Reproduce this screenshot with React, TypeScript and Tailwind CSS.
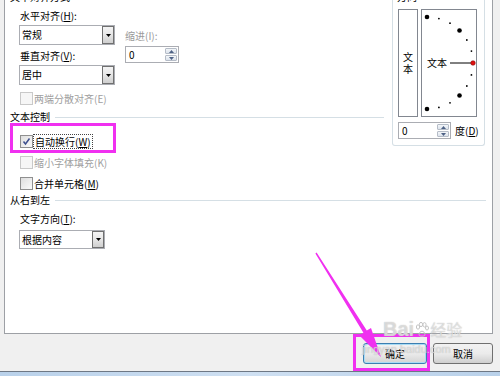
import React from 'react';

const Caret = () => (
  <svg width="5" height="3" viewBox="0 0 5 3">
    <path d="M0 0 H5 L2.5 3 Z" fill="#000" />
  </svg>
);

const Combo = ({ text, w, h }: { text: string; w: string; h: string }) => (
  <div className={`flex ${w} ${h} border border-[#abadb3] bg-white`}>
    <span className="flex-1 pl-[2px] flex items-center">{text}</span>
    <div className="w-[12px] flex items-center justify-center border border-[#707070] bg-linear-to-b from-[#f4f4f4] via-[#e6e6e6] to-[#cfcfcf]">
      <Caret />
    </div>
  </div>
);

const Spin = ({ w }: { w: string }) => (
  <div className={`flex ${w} h-[17px] border border-[#abadb3] bg-white`}>
    <span className="flex-1 pl-[3px] flex items-center">0</span>
    <div className="w-[13px] flex flex-col gap-[1px] py-[1px] pr-[1px]">
      <div className="flex-1 flex items-center justify-center border border-[#b5bcc7] rounded-[1px] bg-linear-to-b from-[#f3f6f9] to-[#dce3ec]">
        <svg width="5" height="3" viewBox="0 0 5 3"><path d="M0 3 H5 L2.5 0 Z" fill="#4d6185" /></svg>
      </div>
      <div className="flex-1 flex items-center justify-center border border-[#b5bcc7] rounded-[1px] bg-linear-to-b from-[#f3f6f9] to-[#dce3ec]">
        <svg width="5" height="3" viewBox="0 0 5 3"><path d="M0 0 H5 L2.5 3 Z" fill="#4d6185" /></svg>
      </div>
    </div>
  </div>
);

const Check = ({ checked, disabled }: { checked?: boolean; disabled?: boolean }) => (
  <div
    className={`w-[13px] h-[13px] border flex items-center justify-center ${
      disabled
        ? 'border-[#c9c9c9] bg-[#f6f6f6]'
        : 'border-[#8f8f8f] bg-linear-to-br from-[#dedede] to-[#fbfbfb]'
    }`}
  >
    {checked && (
      <svg width="11" height="11" viewBox="0 0 11 11">
        <path d="M2.5 5.5 L4.5 8 L8.5 2.5" stroke="#3d4f8e" strokeWidth="1.5" fill="none" />
      </svg>
    )}
  </div>
);

const GroupLabel = ({ text, className = '' }: { text: string; className?: string }) => (
  <div className={`flex items-center h-[12px] ${className}`}>
    <span>{text}</span>
    <div className="flex-1 ml-[5px] border-t border-[#d5dfe5]" />
  </div>
);

export default function App() {
  const dots = [];
  for (let i = 0; i <= 12; i++) {
    const a = ((-90 + i * 15) * Math.PI) / 180;
    const x = 5 + 46 * Math.cos(a);
    const y = 53 + 46 * Math.sin(a);
    const big = i % 3 === 0;
    if (i === 6) continue;
    dots.push(<circle key={i} cx={x} cy={y} r={big ? 2.3 : 0.9} fill="#000" />);
  }

  return (
    <div className="relative w-[500px] h-[376px] overflow-hidden bg-[#f0f0f0] flex flex-col text-[10px] leading-[12px] text-black font-[family-name:'Noto_Sans_CJK_SC',sans-serif]">
      {/* tab page */}
      <div className="ml-[4px] w-[489px] h-[334px] shrink-0 bg-white border-l border-r border-b border-[#9da0a5] flex flex-col">
        <div className="flex h-[188px]">
          {/* left column */}
          <div className="w-[379px] flex flex-col">
            <div className="-mt-[9px] ml-[5px] h-[12px]">文本对齐方式</div>
            <div className="flex">
              <div className="ml-[14px] flex flex-col">
                <div className="mt-[7px] pl-[1px]">水平对齐(<u>H</u>):</div>
                <div className="mt-[3px]"><Combo text="常规" w="w-[96px]" h="h-[20px]" /></div>
                <div className="mt-[5px] pl-[1px]">垂直对齐(<u>V</u>):</div>
                <div className="mt-[3px]"><Combo text="居中" w="w-[96px]" h="h-[20px]" /></div>
              </div>
              <div className="ml-[10px] flex flex-col">
                <div className="mt-[27px] text-[#9a9a9a]">缩进(I):</div>
                <div className="mt-[4px]"><Spin w="w-[54px]" /></div>
              </div>
            </div>
            <div className="mt-[7px] ml-[15px] flex items-center gap-[1px] text-[#a0a0a0]">
              <Check disabled />
              <span>两端分散对齐(E)</span>
            </div>
            <GroupLabel text="文本控制" className="mt-[6px] ml-[5px]" />
            <div className="mt-[11px] ml-[15px] flex items-center">
              <Check checked />
              <span className="border border-dotted border-[#444] px-[1px] leading-[13px]">自动换行(<u>W</u>)</span>
            </div>
            <div className="mt-[7px] ml-[15px] flex items-center gap-[1px] text-[#a0a0a0]">
              <Check disabled />
              <span>缩小字体填充(K)</span>
            </div>
            <div className="mt-[8px] ml-[15px] flex items-center gap-[1px]">
              <Check />
              <span>合并单元格(<u>M</u>)</span>
            </div>
          </div>

          {/* orientation group */}
          <div className="ml-[8px] w-[93px] h-[146px] border-l border-r border-b border-[#d5dfe5] rounded-b-[3px] flex flex-col">
            <div className="-mt-[9px] ml-[4px] h-[12px]">方向</div>
            <div className="mt-[6px] flex">
              <div className="ml-[5px] w-[20px] h-[108px] border border-[#828790] flex flex-col items-center justify-center">
                <span>文</span>
                <span>本</span>
              </div>
              <div className="ml-[3px] w-[56px] h-[108px] border border-[#828790]">
                <svg width="54" height="106" viewBox="0 0 54 106">
                  {dots}
                  <text x="5" y="57" fontSize="10" fontFamily="Noto Sans CJK SC, sans-serif">文本</text>
                  <line x1="28" y1="53" x2="49" y2="53" stroke="#000" strokeWidth="1" />
                  <circle cx="51" cy="53" r="2.3" fill="#e01010" stroke="#700" strokeWidth="0.5" />
                </svg>
              </div>
            </div>
            <div className="mt-[5px] ml-[5px] flex items-center">
              <Spin w="w-[53px]" />
              <span className="ml-[4px]">度(<u>D</u>)</span>
            </div>
          </div>
        </div>

        <GroupLabel text="从右到左" className="mt-[6px] ml-[5px] mr-[6px]" />
        <div className="mt-[7px] ml-[15px]">文字方向(<u>T</u>):</div>
        <div className="mt-[5px] ml-[14px]">
          <Combo text="根据内容" w="w-[86px]" h="h-[19px]" />
        </div>
      </div>

      {/* buttons */}
      <div className="h-[37px] flex justify-end items-start pt-[9px] pr-[7px] gap-[6px]">
        <button className="w-[64px] h-[21px] rounded-[3px] border border-[#3c7fb1] bg-linear-to-b from-[#f2f2f2] via-[#ebebeb] to-[#d4d4d4] shadow-[inset_0_0_0_1px_#a9dcf5]">
          确定
        </button>
        <button className="w-[60px] h-[21px] rounded-[3px] border border-[#707070] bg-linear-to-b from-[#f2f2f2] via-[#ebebeb] to-[#cfcfcf]">
          取消
        </button>
      </div>
      <div className="flex-1 border-t border-[#6e7885] bg-linear-to-r from-[#b9d1ea] via-[#cfe0f2] to-[#b9d1ea]" />

      {/* annotations */}
      <div className="absolute left-[10px] top-[123px] w-[106px] h-[30px] border-[3px] border-[#f030f0]" />
      <div className="absolute left-[353px] top-[334px] w-[77px] h-[37px] border-[3px] border-[#f030f0]" />
      <svg className="absolute left-0 top-0 pointer-events-none" width="500" height="376" viewBox="0 0 500 376">
        <polygon
          points="315.4,253.4 316.6,252.6 366.8,330.5 371,327.9 381,357 359.2,335.3 363.4,332.7"
          fill="#f030f0"
        />
      </svg>
      <div className="absolute left-[383px] top-[318px] flex items-end text-white/50 [text-shadow:0_0_1px_#b0b0b0] pointer-events-none">
        <span className="text-[20px] leading-[22px] font-bold font-[family-name:'Liberation_Sans',sans-serif]">Bai</span>
        <svg className="ml-[1px] mb-[3px]" width="14" height="15" viewBox="0 0 14 15">
          <g fill="none" stroke="#c4c4c4" strokeWidth="1">
            <ellipse cx="3" cy="5" rx="1.6" ry="2.2" />
            <ellipse cx="6" cy="2.5" rx="1.6" ry="2.2" />
            <ellipse cx="9.5" cy="2.8" rx="1.6" ry="2.2" />
            <ellipse cx="12" cy="6" rx="1.5" ry="2" />
            <path d="M4 13 C4 8 10 8 10 13 C10 14.5 4 14.5 4 13 Z" />
          </g>
        </svg>
        <span className="text-[16px] leading-[22px] ml-[1px]">经验</span>
      </div>
      <div className="absolute left-[362px] top-[343px] text-[11px] leading-[13px] text-white/50 [text-shadow:0_0_1px_#a8a8a8] font-[family-name:'Liberation_Sans',sans-serif] pointer-events-none">
        jingyan.baidu.com
      </div>
    </div>
  );
}
